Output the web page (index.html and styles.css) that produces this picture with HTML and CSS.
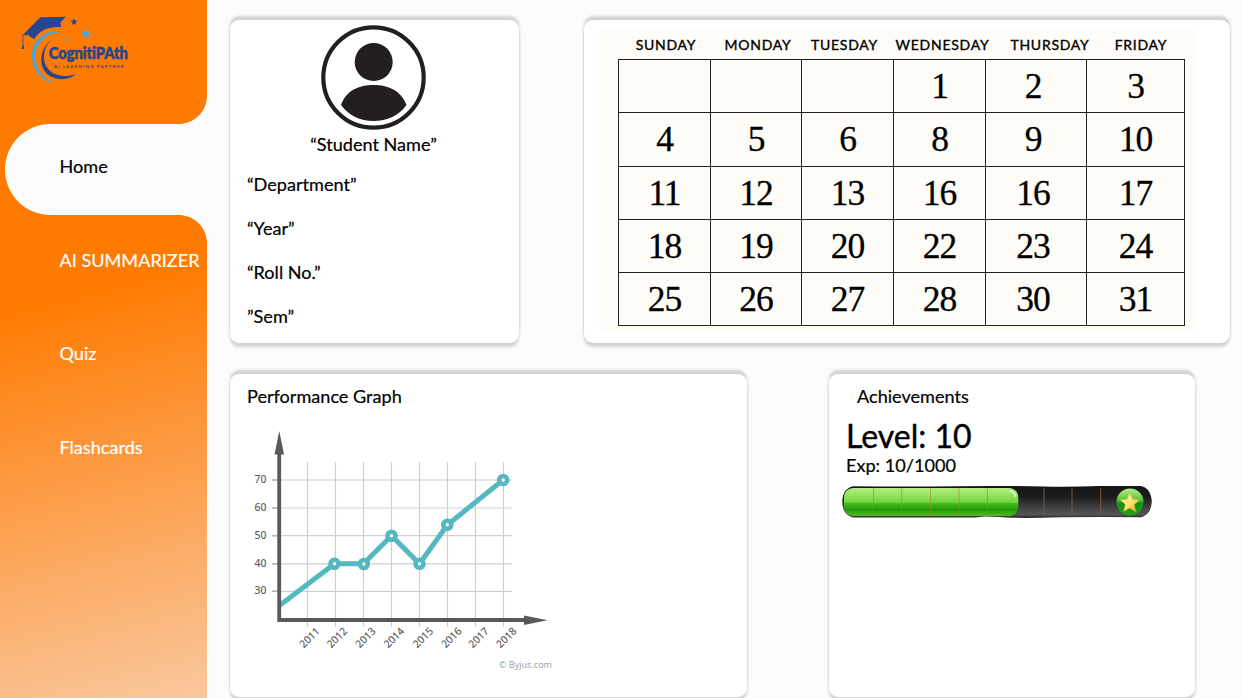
FILE: index.html
```html
<!DOCTYPE html>
<html lang="en">
<head>
<meta charset="utf-8">
<title>CognitiPAth</title>
<link rel="stylesheet" href="styles.css">
</head>
<body>
<aside class="sidebar">
  <svg class="logo" viewBox="0 0 207 124" role="img" aria-label="CognitiPAth">
    <path class="light" d="M64 31.7C44 28.5 32 40 32 55.5 32 70 42 82.3 55 83 43 79 35.7 69 35.7 56 35.7 42 47 32 64 31.7Z"/>
    <path class="navy" d="M51.7 40C36 50 37 79 62 79.2 68 79 73 77 75.5 74.2 58 80 44 71 44 57 44 49 47 44 51.7 40Z"/>
    <path class="navy" d="M23 34.8 40.3 17.3 66 16.8 60.3 22.8 61.3 27.2C49 26.5 40 30 34.4 39L29 36.3 29.3 34.8Z"/>
    <path class="tassel" d="M30 34.8H22.9V47"/>
    <path class="navy" d="M21.7 49 22.3 45.5H23.5L24.3 49Z"/>
    <path class="navy" d="M74 18.1 75 20.6 77.6 20.8 75.6 22.5 76.3 25 74 23.6 71.8 25 72.4 22.5 70.4 20.8 73 20.6Z"/>
    <path class="light" d="M85.8 28.8 87.2 32.1 90.8 32.4 88.1 34.8 88.9 38.3 85.8 36.4 82.7 38.3 83.5 34.8 80.8 32.4 84.4 32.1Z"/>
    <path class="light" d="M66.7 37.4 67.3 38.9 68.8 39 67.6 40 68 41.6 66.7 40.8 65.4 41.6 65.8 40 64.6 39 66.1 38.9Z"/>
    <text class="logo-name" x="48.8" y="59" textLength="79" lengthAdjust="spacingAndGlyphs">CognitiPAth</text>
    <text class="logo-tag" x="54" y="67.8" textLength="69.5">AI LEARNING PARTNER</text>
  </svg>
  <nav class="nav">
    <a class="nav-item active">Home</a>
    <a class="nav-item">AI SUMMARIZER</a>
    <a class="nav-item">Quiz</a>
    <a class="nav-item">Flashcards</a>
  </nav>
</aside>
<main class="main">
  <div class="row">
    <section class="card profile">
      <svg class="avatar" viewBox="321 24.5 105 105">
        <circle cx="373.5" cy="77" r="50.2" fill="none" stroke="#231f20" stroke-width="4.2"/>
        <circle cx="373.7" cy="61.5" r="19" fill="#231f20"/>
        <path fill="#231f20" d="M341 104.5C346 90 359 84.5 373.5 84.5S401 90 406.5 104.5C399 115 387 120.5 373.5 120.5S349 115 341 104.5Z"/>
      </svg>
      <div class="student">“Student Name”</div>
      <div class="details">
        <div>“Department”</div>
        <div>“Year”</div>
        <div>“Roll No.”</div>
        <div>”Sem”</div>
      </div>
    </section>
    <section class="card calendar-card">
      <div class="calendar">
        <div class="days"><span>SUNDAY</span><span>MONDAY</span><span>TUESDAY</span><span>WEDNESDAY</span><span>THURSDAY</span><span>FRIDAY</span></div>
        <div class="dates">
          <span></span><span></span><span></span><span>1</span><span>2</span><span>3</span>
          <span>4</span><span>5</span><span>6</span><span>8</span><span>9</span><span>10</span>
          <span>11</span><span>12</span><span>13</span><span>16</span><span>16</span><span>17</span>
          <span>18</span><span>19</span><span>20</span><span>22</span><span>23</span><span>24</span>
          <span>25</span><span>26</span><span>27</span><span>28</span><span>30</span><span>31</span>
        </div>
      </div>
    </section>
  </div>
  <div class="row">
    <section class="card performance">
      <h2 class="title">Performance Graph</h2>
      <svg class="chart" viewBox="230 414 340 270">
        <path class="grid" d="M307.5 462V627M335.5 462V627M363.5 462V627M391.5 462V627M419.5 462V627M447.5 462V627M475.5 462V627M503.5 462V627M272 480H512M272 508H512M272 535.7H512M272 563.8H512M272 591.3H512"/>
        <path class="ticks" d="M272 480H278M272 508H278M272 535.7H278M272 563.8H278M272 591.3H278"/>
        <path class="line" d="M279.5 605.5 334.5 563.8H363.5L391.5 535.8 419.5 563.8 447.5 524.8 503 480"/>
        <path class="axis" d="M279.2 450V620H526"/>
        <path class="arrow" d="M279.3 431 284 454.5H274.5ZM547.5 620.2 524 615.5V625Z"/>
        <g class="points"><circle cx="334.5" cy="563.8" r="4"/><circle cx="363.8" cy="564" r="4"/><circle cx="391.5" cy="535.8" r="4"/><circle cx="419.5" cy="563.8" r="4"/><circle cx="447.3" cy="524.8" r="4"/><circle cx="503.2" cy="480" r="4"/></g>
        <g class="labels" text-anchor="end"><text x="266.3" y="483">70</text><text x="266.3" y="511.3">60</text><text x="266.3" y="539">50</text><text x="266.3" y="567.3">40</text><text x="266.3" y="594.3">30</text></g>
        <g class="labels">
          <text transform="translate(303.8 648.5) rotate(-45)">2011</text>
          <text transform="translate(331.2 648.5) rotate(-45)">2012</text>
          <text transform="translate(359.8 648.5) rotate(-45)">2013</text>
          <text transform="translate(388.2 648.5) rotate(-45)">2014</text>
          <text transform="translate(417.2 648.5) rotate(-45)">2015</text>
          <text transform="translate(445.7 648.5) rotate(-45)">2016</text>
          <text transform="translate(472.8 648.5) rotate(-45)">2017</text>
          <text transform="translate(500.6 648.5) rotate(-45)">2018</text>
        </g>
        <text class="credit" x="499" y="668" textLength="53" lengthAdjust="spacingAndGlyphs">© Byjus.com</text>
      </svg>
    </section>
    <section class="card achievements">
      <h2 class="title">Achievements</h2>
      <div class="level">Level: 10</div>
      <div class="exp">Exp: 10/1000</div>
      <svg class="xp" viewBox="842 485 310 34">
        <defs>
          <linearGradient id="track" x2="0" y2="1"><stop offset="0" stop-color="#151515"/><stop offset=".35" stop-color="#1b1b1c"/><stop offset=".6" stop-color="#39393b"/><stop offset=".9" stop-color="#555557"/><stop offset="1" stop-color="#222"/></linearGradient>
          <linearGradient id="fill" x2="0" y2="1"><stop offset="0" stop-color="#b5ec80"/><stop offset=".2" stop-color="#9ce566"/><stop offset=".5" stop-color="#74d642"/><stop offset=".56" stop-color="#45b91e"/><stop offset=".78" stop-color="#209b08"/><stop offset="1" stop-color="#50bd27"/></linearGradient>
          <linearGradient id="ball" x2="0" y2="1"><stop offset="0" stop-color="#b4ef91"/><stop offset=".4" stop-color="#5dc83b"/><stop offset=".55" stop-color="#169012"/><stop offset="1" stop-color="#1fa51b"/></linearGradient>
          <linearGradient id="gold" x2="1" y2="1"><stop offset="0" stop-color="#fff9a8"/><stop offset=".5" stop-color="#ffe676"/><stop offset="1" stop-color="#e9a820"/></linearGradient>
        </defs>
        <path fill="url(#track)" d="M853 486.3Q900 486.8 930 486.4T990 485.9T1044 486.5T1100 486H1141Q1151 488 1151.8 502Q1151 515 1141 517.3Q1090 516.8 1050 517.6T1000 517L985 516.5L975 517.5H853Q842.3 515 842.3 502T853 486.3Z"/>
        <rect x="844" y="488" width="174.3" height="28" rx="9" fill="url(#fill)"/>
        <path d="M1010 491.3Q1014.5 491.5 1015 496" stroke="#e8ffda" stroke-width="1.6" stroke-linecap="round" fill="none"/>
        <path d="M873.5 488V516M901.7 488V516M930.5 488V516M959 488V516M987.5 488V516" stroke="#a38a27" stroke-opacity=".6" stroke-width="1"/>
        <path d="M1044 488V516M1072 488V516M1100.7 488V516" stroke="#765640" stroke-width="1"/>
        <circle cx="1130" cy="502" r="13.6" fill="url(#ball)"/>
        <path fill="url(#gold)" stroke="#e6bd3c" stroke-width=".6" d="M1129.7 492.8 1132.5 499.4 1139.2 500 1134 504.7 1135.7 511.5 1129.7 508 1123.8 511.3 1125.4 504.5 1120.5 500 1127 499.4Z"/>
      </svg>
    </section>
  </div>
</main>
</body>
</html>
```
FILE: styles.css
```css
* { box-sizing: border-box; }
body {
  margin: 0;
  height: 698px;
  overflow: hidden;
  display: flex;
  background: #fcfcfc;
  color: #000;
  font: 18.1px/24px Lato, sans-serif;
  -webkit-text-stroke: .2px;
}
svg { -webkit-text-stroke: 0; }
.sidebar {
  width: 207px;
  height: 698px;
  flex: none;
  background: linear-gradient(166deg, #ff7a00 41%, #f9c79d 100%);
}
.logo { display: block; width: 207px; height: 124px; }
.navy { fill: #27468f; }
.light { fill: #4aa5d6; }
.tassel { fill: none; stroke: #27468f; stroke-width: .8; }
.logo-name {
  font: 900 16px Lato, sans-serif;
  font-variant-ligatures: none;
  fill: #27468f;
  stroke: #27468f;
  stroke-width: .6;
}
.logo-tag { font: 700 4.2px Lato, sans-serif; fill: #27468f; }
.nav { display: flex; flex-direction: column; }
.nav-item {
  height: 93.7px;
  padding: 31.5px 0 0 59.5px;
  color: #fff;
  white-space: nowrap;
}
.nav-item.active {
  position: relative;
  height: 90.5px;
  margin: 0 0 1.5px 5px;
  padding: 30px 0 0 54.5px;
  border-radius: 46px 0 0 46px;
  background: #fcfcfc;
  color: #000;
}
/* Rounded shoulders above and below the active tab */
.nav-item.active::before,
.nav-item.active::after {
  content: "";
  position: absolute;
  right: 0;
  width: 28px;
  height: 28px;
}
.nav-item.active::before {
  bottom: 100%;
  background: radial-gradient(circle at 0 0, transparent 27.5px, #fcfcfc 28.2px);
}
.nav-item.active::after {
  top: 100%;
  background: radial-gradient(circle at 0 100%, transparent 27.5px, #fcfcfc 28.2px);
}
.main {
  flex: 1;
  padding: 20px 12px 0 23px;
  display: flex;
  flex-direction: column;
  gap: 30.5px;
}
.row { display: flex; }
.card {
  height: 323px;
  flex: none;
  border-radius: 9px;
  background: #fff;
  box-shadow: 0 4px 3px rgba(0, 0, 0, .17), 0 -4px 3px rgba(0, 0, 0, .17);
}
.profile { width: 289px; margin-right: 64.5px; padding-top: 4.5px; }
.avatar { display: block; width: 105px; height: 105px; margin: 0 auto 0 91px; }
.student { margin: 2.5px 2px 0 0; text-align: center; }
.details { display: grid; gap: 20px; margin: 16px 0 0 17px; }
.calendar-card { width: 646.5px; padding: 10px 0 0 17.5px; }
.calendar { width: 594px; height: 302px; padding-left: 17px; background: #fefcf7; }
.days {
  display: grid;
  grid-template-columns: 96px 88px 85px 111px 104px 78px;
  height: 29px;
  line-height: 30px;
  font-size: 14px;
  letter-spacing: .75px;
  text-align: center;
  -webkit-text-stroke: .35px #000;
}
.dates {
  display: grid;
  grid-template-columns: 92px 91px 92px 92px 101px 98px;
  grid-auto-rows: 53.3px;
  width: 567px;
  border: solid #222;
  border-width: 1px 0 0 1px;
  font: 35.5px/53px "Liberation Serif", serif;
  letter-spacing: -1px;
  text-align: center;
  -webkit-text-stroke: .3px #000;
}
.dates span { border: solid #222; border-width: 0 1px 1px 0; }
.dates span:nth-child(6n + 5) { padding-right: 6px; }
.performance { width: 517px; margin-right: 82px; padding: 10.5px 0 0 17px; }
.title { margin: 0; font: inherit; }
.chart { display: block; width: 340px; height: 270px; margin: 6px 0 0 -17px; }
.grid { fill: none; stroke: #ccd0d1; stroke-width: 1.2; }
.ticks { stroke: #b3b7b9; stroke-width: 1.6; }
.line { fill: none; stroke: #53b8bf; stroke-width: 5; }
.axis { fill: none; stroke: #58595b; stroke-width: 3.8; }
.arrow { fill: #58595b; }
.points circle { fill: #fff; stroke: #53b8bf; stroke-width: 4.6; }
.labels { font: 10.3px "Noto Sans", sans-serif; fill: #58595b; stroke: #58595b; stroke-width: .15; }
.credit { font: 9.6px "Noto Sans", sans-serif; fill: #a0a2a4; }
.achievements { width: 366px; padding: 10.5px 0 0 17px; }
.achievements .title { padding-left: 11px; }
.level { margin-top: 8px; font-size: 32px; line-height: 40px; -webkit-text-stroke: .4px; }
.exp { margin-top: -3px; }
.xp { display: block; width: 310px; height: 34px; margin: 8px 0 0 -4px; }
```
